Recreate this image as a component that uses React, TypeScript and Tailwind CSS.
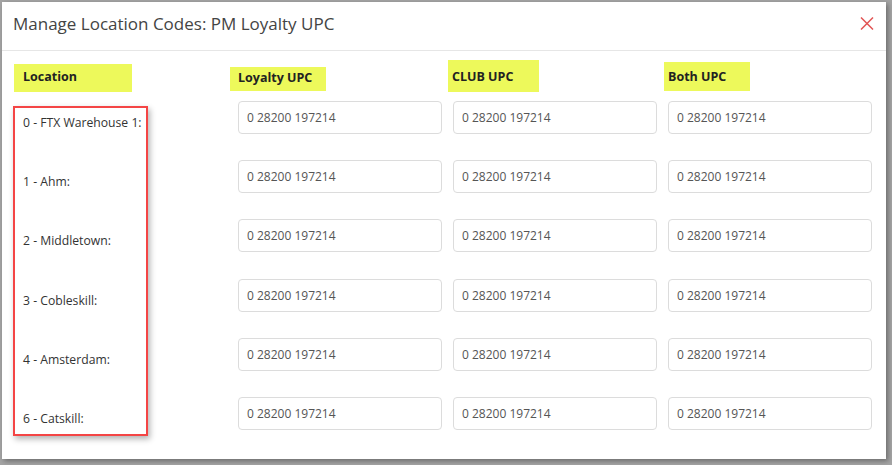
import React from 'react';

const locations = [
  '0 - FTX Warehouse 1:',
  '1 - Ahm:',
  '2 - Middletown:',
  '3 - Cobleskill:',
  '4 - Amsterdam:',
  '6 - Catskill:',
];

const upc = '0 28200 197214';

export default function App() {
  return (
    <div
      className="w-[892px] h-[465px] bg-[#a4a4a4] pt-[2px] pl-[2px] overflow-hidden"
      style={{ fontFamily: '"Open Sans", "Noto Sans", sans-serif' }}
    >
      <div className="w-[884px] h-[457px] bg-white shadow-[2px_2px_5px_rgba(0,0,0,0.35)] flex flex-col">
        {/* header */}
        <div className="h-[49px] shrink-0 border-b border-[#e6e6e6] flex items-center justify-between pl-[11px] pr-[10px]">
          <h2 className="text-[17px] leading-[22px] text-[#444] pb-[5px]">Manage Location Codes: PM Loyalty UPC</h2>
          <button className="w-[16px] h-[16px] flex items-center justify-center mb-[6px] mr-[1px]">
            <svg width="14" height="13" viewBox="0 0 14 13" fill="none">
              <path d="M1 0.5 L13 12.5 M13 0.5 L1 12.5" stroke="#e25555" strokeWidth="1.5" />
            </svg>
          </button>
        </div>

        {/* body */}
        <div className="flex">
          {/* location column */}
          <div className="w-[236px] shrink-0 pl-[11px]">
            <div className="ml-[1px] mt-[13px] w-[118px] h-[28px] bg-[#edf95b] pl-[9px] pt-[4px] text-[12.5px] leading-[17px] font-bold text-[#222]">
              Location
            </div>
            <div className="mt-[14px] w-[135px] h-[330px] border-2 border-[#f44545] shadow-[2px_3px_6px_rgba(0,0,0,0.3)] pl-[8px] pt-[6px] flex flex-col">
              {locations.map((l) => (
                <div key={l} className="h-[59.2px] shrink-0 text-[12.2px] leading-[17px] text-[#333] whitespace-nowrap">
                  {l}
                </div>
              ))}
            </div>
          </div>

          {/* upc columns */}
          <div className="grid grid-cols-[204px_204px_204px] gap-x-[11px]">
            <div className="h-[50px]">
              <div className="-ml-[8px] mt-[16px] w-[96px] h-[24px] bg-[#edf95b] pl-[8px] pt-[2px] text-[12.5px] leading-[17px] font-bold text-[#222]">
                Loyalty UPC
              </div>
            </div>
            <div className="h-[50px]">
              <div className="-ml-[5px] mt-[9px] w-[91px] h-[32px] bg-[#edf95b] pl-[4px] pt-[8px] text-[12.5px] leading-[17px] font-bold text-[#222]">
                CLUB UPC
              </div>
            </div>
            <div className="h-[50px]">
              <div className="-ml-[4px] mt-[11px] w-[86px] h-[29px] bg-[#edf95b] pl-[4px] pt-[6px] text-[12.5px] leading-[17px] font-bold text-[#222]">
                Both UPC
              </div>
            </div>

            {locations.map((l) => (
              <React.Fragment key={l}>
                {[0, 1, 2].map((c) => (
                  <input
                    key={c}
                    readOnly
                    value={upc}
                    className="h-[33px] w-[204px] mb-[26.2px] rounded-[4px] border border-[#dcdcdc] px-[8px] text-[12px] text-[#555] outline-none"
                    style={{ fontFamily: '"Open Sans", sans-serif' }}
                  />
                ))}
              </React.Fragment>
            ))}
          </div>
        </div>
      </div>
    </div>
  );
}
